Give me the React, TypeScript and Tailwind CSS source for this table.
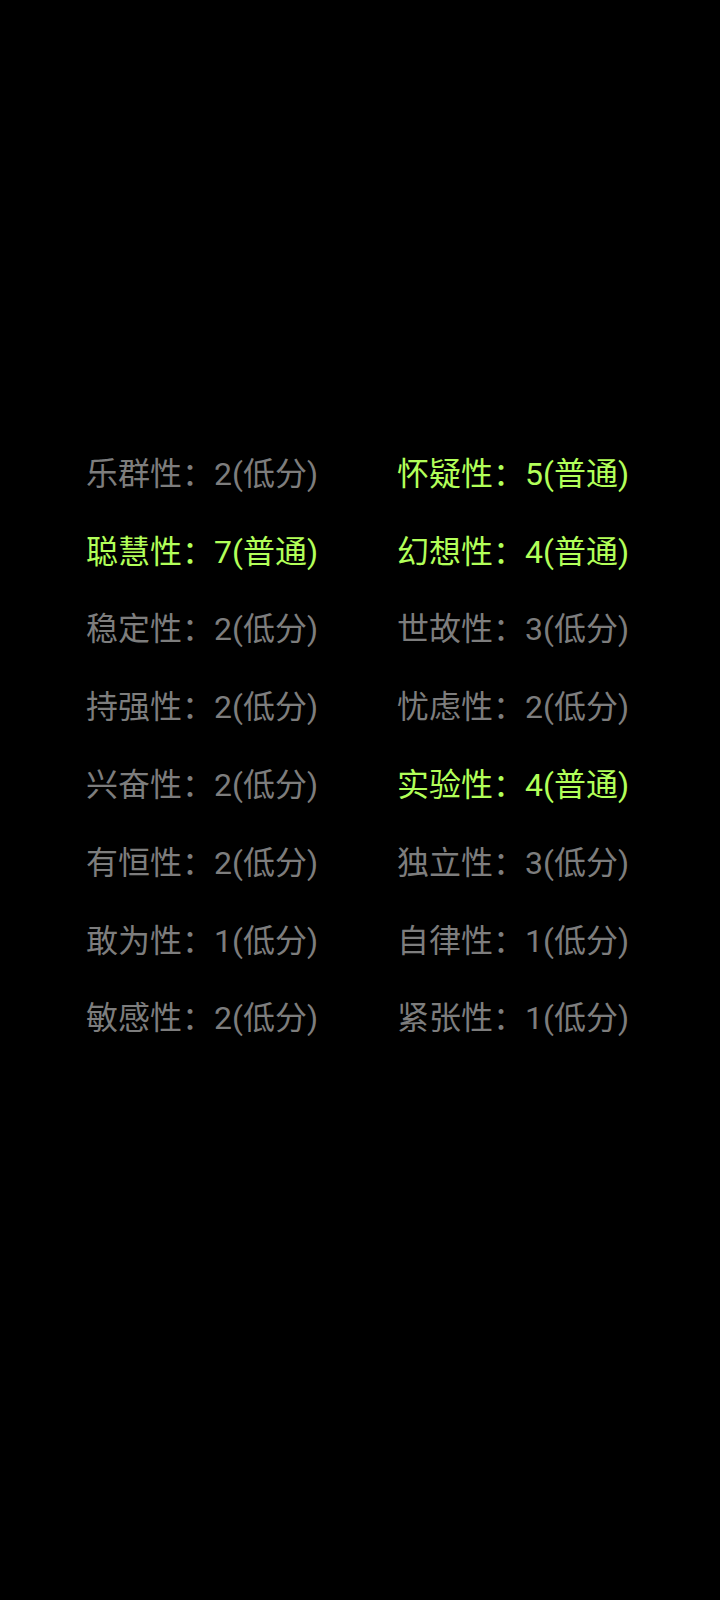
const rows: [string, string, boolean][] = [
  ['乐群性', '2(低分)', false],
  ['怀疑性', '5(普通)', true],
  ['聪慧性', '7(普通)', true],
  ['幻想性', '4(普通)', true],
  ['稳定性', '2(低分)', false],
  ['世故性', '3(低分)', false],
  ['持强性', '2(低分)', false],
  ['忧虑性', '2(低分)', false],
  ['兴奋性', '2(低分)', false],
  ['实验性', '4(普通)', true],
  ['有恒性', '2(低分)', false],
  ['独立性', '3(低分)', false],
  ['敢为性', '1(低分)', false],
  ['自律性', '1(低分)', false],
  ['敏感性', '2(低分)', false],
  ['紧张性', '1(低分)', false],
]

export default function App() {
  return (
    <div
      className="w-[720px] h-[1600px] bg-black pt-[435px] pl-[86px]"
      style={{ fontFamily: "Roboto, 'Noto Sans CJK SC', sans-serif" }}
    >
      <div className="grid grid-cols-[311px_auto] auto-rows-[77.8px] items-center text-[32px]">
        {rows.map(([name, value, hi]) => (
          <div
            key={name}
            className={hi ? 'text-[#b2ff59] whitespace-nowrap' : 'text-[#7d7d7d] whitespace-nowrap'}
          >
            {name}：{value}
          </div>
        ))}
      </div>
    </div>
  )
}
